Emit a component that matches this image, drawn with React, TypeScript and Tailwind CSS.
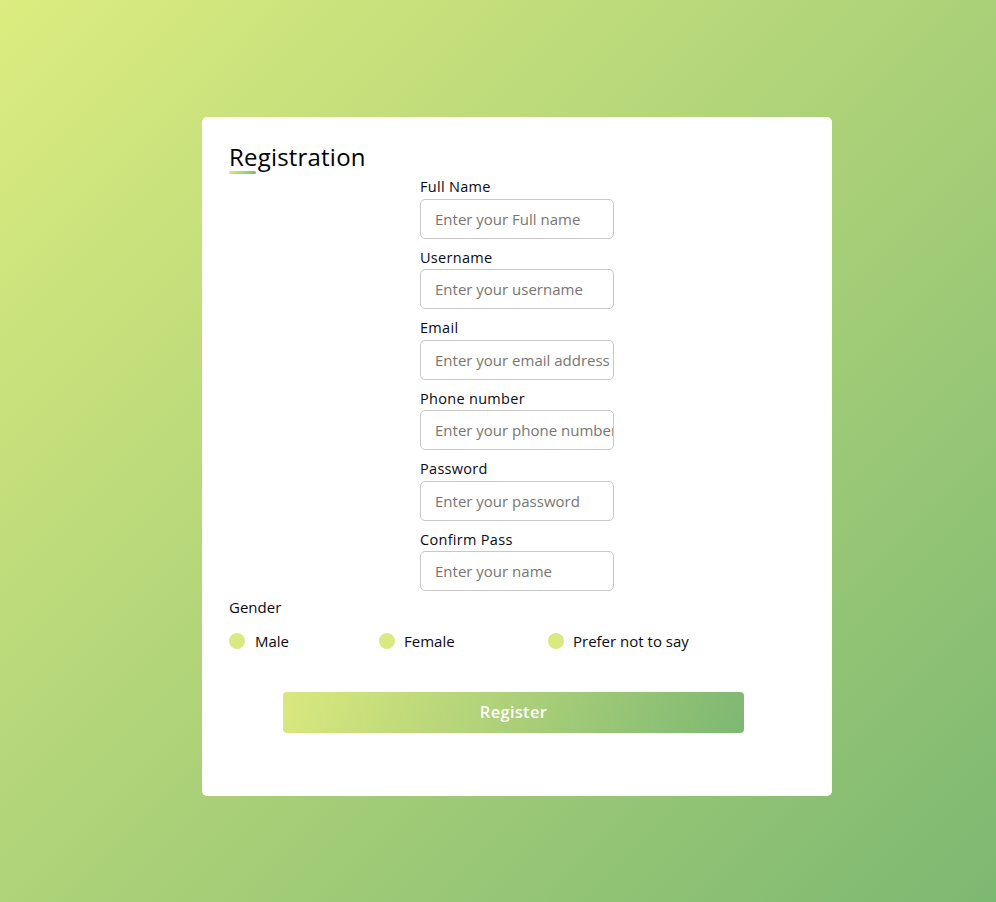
import React from "react";

const fields = [
  { label: "Full Name", ph: "Enter your Full name" },
  { label: "Username", ph: "Enter your username" },
  { label: "Email", ph: "Enter your email address" },
  { label: "Phone number", ph: "Enter your phone number" },
  { label: "Password", ph: "Enter your password" },
  { label: "Confirm Pass", ph: "Enter your name" },
];

export default function App() {
  return (
    <div
      className="w-[996px] h-[902px] flex items-start justify-center pt-[117px] bg-[linear-gradient(135deg,#dcec7f_0%,#7db872_100%)]"
      style={{ fontFamily: '"Open Sans", "Noto Sans", sans-serif' }}
    >
      <div className="ml-[38px] w-[630px] h-[679px] bg-white rounded-[5px] px-[27px] pt-[24px] flex flex-col">
        <div className="relative">
          <h1 className="text-[24px] leading-[32px] text-black font-normal tracking-[0.2px]">Registration</h1>
          <div className="absolute left-0 top-[30px] w-[27px] h-[3px] rounded-sm bg-[linear-gradient(135deg,#dcec7f,#7db872)]" />
        </div>
        <div className="flex flex-col items-center mt-[3px]">
          {fields.map((f) => (
            <div key={f.label} className="w-[194px] flex flex-col mb-[8px]">
              <span className="text-[14.5px] leading-[22.5px] font-medium text-[#0a0a14] tracking-[0.3px]">{f.label}</span>
              <input
                className="h-[40px] w-[194px] border border-[#c8c8c8] rounded-[5px] pl-[14px] text-[15px] outline-none placeholder:text-[#7a7572]"
                placeholder={f.ph}
              />
            </div>
          ))}
        </div>
        <div className="text-[15px] leading-[20px] text-[#0a0a14] mt-[-2px]">Gender</div>
        <div className="flex items-center mt-[13px] text-[15px] text-[#0a0a14]">
          <div className="flex items-center w-[150px]">
            <span className="w-[16px] h-[16px] rounded-full bg-[#dbe983] mr-[10px]" />
            <span>Male</span>
          </div>
          <div className="flex items-center w-[169px]">
            <span className="w-[16px] h-[16px] rounded-full bg-[#dbe983] mr-[9px]" />
            <span>Female</span>
          </div>
          <div className="flex items-center">
            <span className="w-[16px] h-[16px] rounded-full bg-[#dbe983] mr-[9px]" />
            <span>Prefer not to say</span>
          </div>
        </div>
        <div className="flex justify-center mt-[39px] pr-[7px]">
          <button className="w-[461px] h-[41px] rounded-[4px] text-white text-[16.5px] font-semibold tracking-[0.3px] bg-[linear-gradient(110deg,#dae87e_0%,#7db872_100%)]">
            Register
          </button>
        </div>
      </div>
    </div>
  );
}
